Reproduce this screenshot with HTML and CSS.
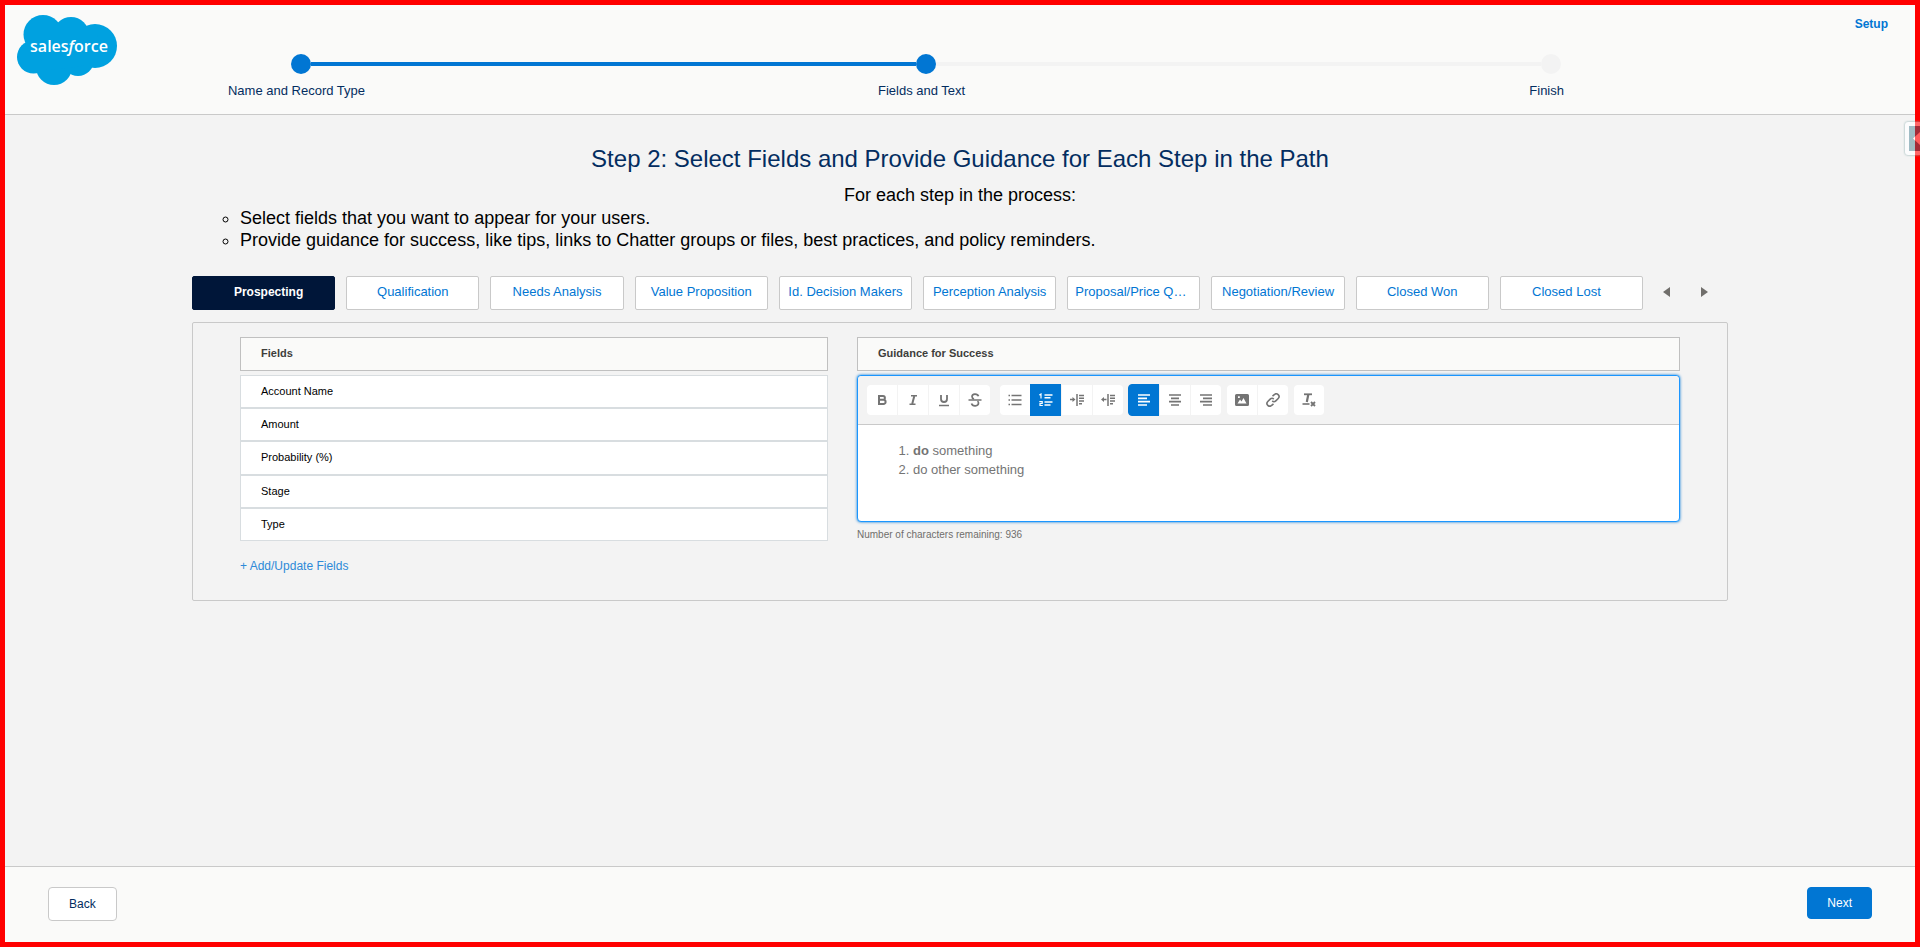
FILE: index.html
```html
<!DOCTYPE html>
<html lang="en">
<head>
<meta charset="utf-8">
<title>Path Settings</title>
<link rel="stylesheet" href="styles.css">
</head>
<body>
<div class="page">
<header class="top">
  <svg class="logo" viewBox="0 0 100 70" width="100" height="70" role="img" aria-label="salesforce">
    <g fill="#00a1e0">
      <circle cx="26" cy="19.500" r="19.500"/>
      <circle cx="54" cy="20" r="18"/>
      <circle cx="78" cy="31" r="22"/>
      <circle cx="16.500" cy="42" r="16.500"/>
      <circle cx="37" cy="52" r="18"/>
      <circle cx="61" cy="45" r="16"/>
      <path d="M16 30L30 20L80 20L85 45L60 52L30 55Z"/>
    </g>
    <text x="52" y="37" text-anchor="middle" class="logo-text">sales<tspan font-style="italic">f</tspan>orce</text>
  </svg>
  <ol class="steps">
    <li class="step done"><span class="dot"></span><span class="step-label">Name and Record Type</span></li>
    <li class="bar done" aria-hidden="true"></li>
    <li class="step done"><span class="dot"></span><span class="step-label">Fields and Text</span></li>
    <li class="bar" aria-hidden="true"></li>
    <li class="step"><span class="dot"></span><span class="step-label">Finish</span></li>
  </ol>
  <a class="setup" href="#">Setup</a>
</header>

<main class="content">
  <h1>Step 2: Select Fields and Provide Guidance for Each Step in the Path</h1>
  <p class="intro">For each step in the process:</p>
  <ul class="tips">
    <li>Select fields that you want to appear for your users.</li>
    <li>Provide guidance for success, like tips, links to Chatter groups or files, best practices, and policy reminders.</li>
  </ul>

  <nav class="stages">
    <a class="tab active" href="#">Prospecting</a>
    <a class="tab" href="#">Qualification</a>
    <a class="tab" href="#">Needs Analysis</a>
    <a class="tab" href="#">Value Proposition</a>
    <a class="tab" href="#">Id. Decision Makers</a>
    <a class="tab" href="#">Perception Analysis</a>
    <a class="tab" href="#">Proposal/Price Quote</a>
    <a class="tab" href="#">Negotiation/Review</a>
    <a class="tab" href="#">Closed Won</a>
    <a class="tab" href="#">Closed Lost</a>
    <div class="arrows">
      <button type="button" aria-label="Previous"><svg width="7" height="10" viewBox="0 0 7 10"><path d="M7 0V10L0 5Z"/></svg></button>
      <button type="button" aria-label="Next stage"><svg width="7" height="10" viewBox="0 0 7 10"><path d="M0 0V10L7 5Z"/></svg></button>
    </div>
  </nav>

  <section class="panel">
    <div class="fields">
      <h2>Fields</h2>
      <ul class="field-list">
        <li>Account Name</li>
        <li>Amount</li>
        <li>Probability (%)</li>
        <li>Stage</li>
        <li>Type</li>
      </ul>
      <a class="add" href="#">+ Add/Update Fields</a>
    </div>
    <div class="guidance">
      <h2>Guidance for Success</h2>
      <div class="editor">
        <div class="toolbar">
          <div class="group wide">
            <button type="button" aria-label="Bold"><svg viewBox="0 0 14 14"><path d="M4 3H8A1.800 1.800 0 0 1 8 6.800H4ZM4 6.800H8.500A2 2 0 0 1 8.500 11H4Z" stroke-width="2"/></svg></button>
            <button type="button" aria-label="Italic"><svg viewBox="0 0 14 14"><path d="M5 2.750H11M3.500 11.250H9.500" stroke-width="1.500"/><path d="M8.300 3L6.200 11" stroke-width="2"/></svg></button>
            <button type="button" aria-label="Underline"><svg viewBox="0 0 14 14"><path d="M4 2V6A3 3 0 0 0 10 6V2" stroke-width="1.800"/><path d="M2 12.500H12" stroke-width="1.500"/></svg></button>
            <button type="button" aria-label="Strikethrough"><svg viewBox="0 0 14 14"><path d="M10.500 3.300C9.500 .2 4 .4 4 3.600C4 4.800 5 5.700 6 6M3.500 10.500C4.500 13.800 10.500 13.500 10.500 10C10.500 9.200 10 8.600 9.500 8.200" stroke-width="1.700"/><path d="M.5 7H13.500" stroke-width="1.500"/></svg></button>
          </div>
          <div class="group">
            <button type="button" aria-label="Bulleted list"><svg viewBox="0 0 14 14"><path d="M.5 2.500H2M.5 7H2M.5 11.500H2M3.500 2.500H13.500M3.500 7H13.500M3.500 11.500H13.500" stroke-width="1.500"/></svg></button>
            <button type="button" class="on" aria-label="Numbered list" aria-pressed="true"><svg viewBox="0 0 14 14"><path d="M.3 2L2 1V5.500M.3 8.700H3.200V10.500H1V12.500H3.800" stroke-width="1.200"/><path d="M5.500 2H13.500M5.500 4.800H11.500M5.500 9H13.500M5.500 12H11.500" stroke-width="1.600"/></svg></button>
            <button type="button" aria-label="Indent"><svg viewBox="0 0 14 14"><path d="M0 6.500H4M7 1V13M9 2.500H14M9 5.200H14M9 8H14M9 10.700H12" stroke-width="1.500"/><path class="solid" d="M2.500 4L5.500 6.500L2.500 9Z"/></svg></button>
            <button type="button" aria-label="Outdent"><svg viewBox="0 0 14 14"><path d="M2 6.500H5.500M7 1V13M9 2.500H14M9 5.200H14M9 8H14M9 10.700H12" stroke-width="1.500"/><path class="solid" d="M3 4L0 6.500L3 9Z"/></svg></button>
          </div>
          <div class="group">
            <button type="button" class="on" aria-label="Align left" aria-pressed="true"><svg viewBox="0 0 14 14"><path d="M1 2H13M1 5.300H10M1 8.700H13M1 12H10" stroke-width="1.700"/></svg></button>
            <button type="button" aria-label="Align center"><svg viewBox="0 0 14 14"><path d="M1 2H13M3 5.300H11M1 8.700H13M3 12H11" stroke-width="1.700"/></svg></button>
            <button type="button" aria-label="Align right"><svg viewBox="0 0 14 14"><path d="M1 2H13M4 5.300H13M1 8.700H13M4 12H13" stroke-width="1.700"/></svg></button>
          </div>
          <div class="group">
            <button type="button" aria-label="Image"><svg viewBox="0 0 14 14"><path class="solid" fill-rule="evenodd" d="M1.500 1H12.500Q14 1 14 2.500V11.500Q14 13 12.500 13H1.500Q0 13 0 11.500V2.500Q0 1 1.500 1ZM2.500 10.500H11.500L8.500 5L6.500 8.500L5 6.500ZM3 3.200V5H4.800V3.200Z"/></svg></button>
            <button type="button" aria-label="Link"><svg viewBox="0 0 14 14"><path d="M6.500 3.200L8.300 1.700A2.600 2.600 0 0 1 12.200 5.500L9.800 7.900A2.600 2.600 0 0 1 6.200 7.900M7.500 10.800L5.700 12.300A2.600 2.600 0 0 1 1.800 8.500L4.200 6.100A2.600 2.600 0 0 1 7.800 6.100" stroke-width="1.600"/></svg></button>
          </div>
          <div class="group">
            <button type="button" aria-label="Remove formatting"><svg viewBox="0 0 14 14"><path d="M2 1.300H10" stroke-width="1.800"/><path d="M6.300 1.500L4.800 9" stroke-width="2.200"/><path d="M.5 11H7.500" stroke-width="1.600"/><path d="M9 9L13 13M13 9L9 13" stroke-width="1.800"/></svg></button>
          </div>
        </div>
        <div class="text" contenteditable="true" role="textbox" aria-label="Guidance for Success" spellcheck="false"><ol><li><b>do</b> something</li><li>do other something</li></ol></div>
      </div>
      <p class="remaining">Number of characters remaining: 936</p>
    </div>
  </section>
</main>

<footer class="bottom">
  <button type="button" class="btn">Back</button>
  <button type="button" class="btn primary">Next</button>
</footer>
</div>

<div class="drawer" aria-hidden="true"><svg width="16" height="33" viewBox="0 0 16 33">
  <path d="M16 0H4Q1 0 1 3V30Q1 33 4 33H16Z" fill="#fcfcfd"/>
  <path d="M5 4H11V29H5Z" fill="#a0bcc5"/>
  <path d="M11 0H16V33H11Z" fill="#ff6668"/>
  <path d="M11 4H16V29H11Z" fill="#a32a38"/>
  <path d="M16 10V23L9 16.500Z" fill="#ff5a5c"/>
  <path d="M11 14.600V18.400L9 16.500Z" fill="#fff"/>
</svg></div>
</body>
</html>
```
FILE: styles.css
```css
* { box-sizing: border-box; }

body {
  margin: 0;
  min-height: 100vh;
  padding: 5px;
  display: flex;
  position: relative;
  background: #f00;
  color: #000;
  font-family: "Liberation Sans", Arial, sans-serif;
  font-size: 13px;
}
.page {
  flex: 1;
  min-width: 0;
  display: flex;
  flex-direction: column;
  background: #f3f3f3;
}

h1, h2, p, ul, ol { margin: 0; padding: 0; }
a { text-decoration: none; }
button { font-family: inherit; cursor: pointer; }

/* Header */
.top {
  display: grid;
  grid-template-columns: 15% 1fr 18.5%;
  align-items: start;
  min-height: 110px;
  background: #fafaf9;
  border-bottom: 1px solid #c9c9c9;
}
.logo { margin: 10px 0 0 12px; }
.logo-text { font-family: "Open Sans", sans-serif; font-size: 16px; font-weight: 600; fill: #fff; }
.steps { display: flex; list-style: none; padding-top: 49px; margin: 0 1px 0 -1px; }
.step {
  width: 20px;
  display: flex;
  flex-direction: column;
  align-items: center;
  gap: 9px;
}
.dot { width: 20px; height: 20px; border-radius: 50%; background: #f3f3f3; }
.step-label { margin-right: 8px; white-space: nowrap; line-height: 16px; color: #032d60; }
.bar { flex: 1; height: 4px; margin-top: 8px; background: #f3f3f3; }
.done .dot, .bar.done { background: #0176d3; }
.setup {
  justify-self: end;
  margin: 11px 27px 0 0;
  line-height: 16px;
  font-size: 12px;
  font-weight: bold;
  color: #0176d3;
}

/* Main content */
.content { flex: 1; padding: 29px 187px 0; }
h1 { font-size: 24px; line-height: 30px; font-weight: normal; text-align: center; color: #032d60; }
.intro { margin-top: 10px; font-size: 18px; line-height: 22px; text-align: center; }
.tips { list-style: circle; padding-left: 48px; margin-top: 1px; font-size: 18px; line-height: 22px; }

.stages { display: flex; gap: 11px; margin-top: 25px; }
.tab {
  flex: 1 1 0;
  min-width: 0;
  height: 34px;
  padding: 0 7px;
  border: 1px solid #c9c9c9;
  border-radius: 2px;
  background: #fff;
  color: #0176d3;
  line-height: 30px;
  text-align: center;
  white-space: nowrap;
  overflow: hidden;
  text-overflow: ellipsis;
}
.tab.active { padding-left: 17px; background: #001639; border-color: #001639; color: #fff; font-size: 12px; font-weight: bold; }
.tab:nth-of-type(10) { padding-right: 17px; }
.arrows { display: flex; width: 74px; padding-bottom: 2px; }
.arrows button { width: 38px; flex: none; border: 0; padding: 0 14px 0 0; background: none; }
.arrows path { fill: #706e6b; }

.panel {
  display: grid;
  grid-template-columns: 588fr 823fr;
  gap: 29px;
  margin-top: 12px;
  padding: 14px 47px 26px;
  border: 1px solid #c9c9c9;
  border-radius: 2px;
}
h2 {
  border: 1px solid #c0c0c0;
  background: #fafaf9;
  padding: 7px 20px 9px;
  font-size: 11px;
  line-height: 16px;
  color: #3e3e3c;
}
.field-list {
  display: grid;
  grid-auto-rows: 1fr;
  min-height: 166px;
  margin-top: 4px;
  list-style: none;
  font-size: 11px;
  line-height: 16px;
}
.field-list li { border: 1px solid #d8dde0; background: #fff; padding: 7px 20px; }
.add { display: inline-block; margin-top: 17px; font-size: 12px; line-height: 16px; color: #2e8ad8; }

/* Rich text editor */
.editor {
  margin-top: 4px;
  border: 1px solid #1b96ff;
  border-radius: 4px;
  box-shadow: 0 0 3px #0176d3;
  background: #fff;
}
.toolbar {
  display: flex;
  gap: 4px;
  padding: 8px;
  border-bottom: 1px solid #c9c9c9;
  border-radius: 4px 4px 0 0;
  background: #f3f3f3;
}
.group { display: flex; }
.group.wide { margin-right: 4px; }
.group button {
  width: 32px;
  height: 32px;
  padding: 0;
  display: grid;
  place-items: center;
  border: 1px solid #f3f3f3;
  background: #fff;
  background-clip: padding-box;
}
.group button + button { margin-left: -1px; }
.group button:first-child { border-radius: 4px 0 0 4px; }
.group button:last-child { border-radius: 0 4px 4px 0; }
.group button:only-child { border-radius: 4px; }
.group button svg { width: 14px; height: 14px; fill: none; stroke: #747474; }
.group button .solid { fill: #747474; stroke: none; }
.group button.on { background: #0176d3; border-color: #0176d3; }
.group button.on svg { stroke: #fff; }
.text { min-height: 96px; padding: 16px; line-height: 19px; color: #747474; outline: none; }
.text ol { padding-left: 39px; }
.remaining { margin-top: 5px; font-size: 10px; line-height: 16px; color: #706e6b; }

/* Footer */
.bottom {
  display: flex;
  justify-content: space-between;
  align-items: flex-start;
  min-height: 76px;
  padding: 20px 43px;
  background: #fafaf9;
  border-top: 1px solid #c9c9c9;
}
.btn {
  height: 34px;
  padding: 0 20px;
  border: 1px solid #c9c9c9;
  border-radius: 4px;
  background: #fff;
  color: #032d60;
  font-size: 12px;
}
.btn.primary { height: 32px; padding: 0 19px; background: #0176d3; border-color: #0176d3; color: #fff; }

/* Collapsed side drawer handle over the window edge */
.drawer { position: absolute; z-index: 2; top: 122px; right: 0; width: 16px; filter: drop-shadow(0 0 1px #8aa); }
.drawer svg { display: block; }
```
